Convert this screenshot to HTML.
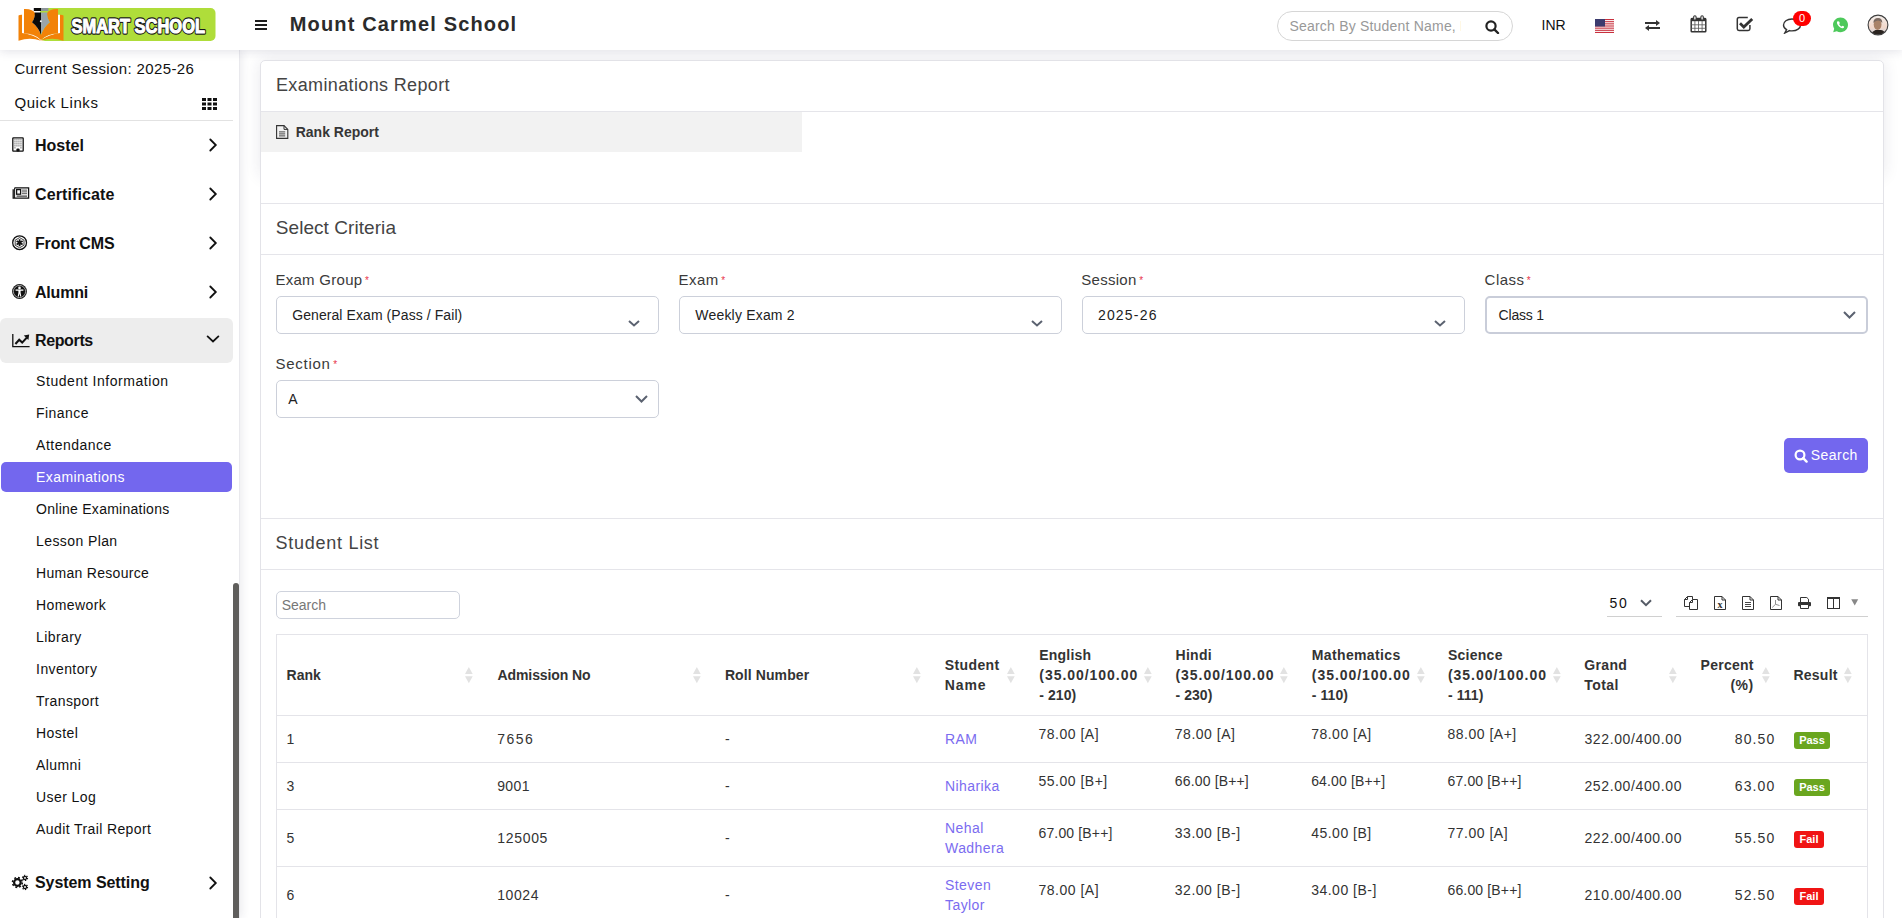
<!DOCTYPE html>
<html><head><meta charset="utf-8"><title>Rank Report</title>
<style>
*{box-sizing:border-box;margin:0;padding:0}
html,body{width:1902px;height:918px;overflow:hidden;background:#fff;font-family:"Liberation Sans",sans-serif;color:#333}
.a{position:absolute;white-space:nowrap}
.chev{position:absolute;width:8px;height:8px;border-right:2px solid #222;border-top:2px solid #222;transform:rotate(45deg)}
.sel{position:absolute;height:38px;border:1px solid #ccd0da;border-radius:5px;background:#fff}
.hl{position:absolute;height:1px;background:#e5e5ea}
.req{color:#e8344a;font-size:10px;position:relative;top:-1px;margin-left:2.5px;letter-spacing:0}
</style></head><body>

<div class="a" style="left:260px;top:60px;width:1624px;height:116px;border-radius:5px 5px 0 0;box-shadow:0 0 16px rgba(40,40,80,.10)"></div>
<div class="a" style="left:260px;top:60px;width:1624px;height:870px;background:#fff;border:1px solid #e3e3e8;border-radius:5px 5px 0 0"></div>
<div class="a" style="left:276.00px;top:71.76px;font-size:18px;line-height:26px;color:#444;letter-spacing:0.36px">Examinations Report</div>
<div class="hl" style="left:261px;top:111px;width:1622px"></div>
<div class="a" style="left:261px;top:112px;width:541px;height:40px;background:#f2f2f2"></div>
<svg class="a" style="left:276px;top:125px" width="13" height="14" viewBox="0 0 13 14"><path d="M0.6 0.6H8L11.8 4.4V13.4H0.6Z" fill="none" stroke="#333" stroke-width="1.1"/><path d="M8 0.6V4.4H11.8" fill="none" stroke="#333" stroke-width="1"/><path d="M3 6.9H9.2M3 8.9H9.2M3 10.9H9.2" stroke="#333" stroke-width="0.9"/></svg>
<div class="a" style="left:295.70px;top:122.05px;font-size:14px;line-height:20px;color:#363636;font-weight:bold">Rank Report</div>
<div class="hl" style="left:261px;top:203px;width:1622px"></div>
<div class="a" style="left:275.80px;top:214.22px;font-size:19px;line-height:28px;color:#444;letter-spacing:0.06px">Select Criteria</div>
<div class="hl" style="left:261px;top:254px;width:1622px"></div>
<div class="a" style="left:275.40px;top:268.60px;font-size:15px;line-height:22px;color:#3a3a3a;letter-spacing:0.29px">Exam Group<span class="req">*</span></div>
<div class="sel" style="left:276px;top:296px;width:383px"></div>
<div class="a" style="left:292.20px;top:304.75px;font-size:14px;line-height:20px;color:#222;letter-spacing:0.08px">General Exam (Pass / Fail)</div>
<svg class="a" style="left:628px;top:320px" width="12" height="7" viewBox="0 0 12 7"><path d="M1 1L6 5.5L11 1" fill="none" stroke="#5b6270" stroke-width="2"/></svg>
<div class="a" style="left:678.50px;top:268.60px;font-size:15px;line-height:22px;color:#3a3a3a;letter-spacing:0.45px">Exam<span class="req">*</span></div>
<div class="sel" style="left:679px;top:296px;width:383px"></div>
<div class="a" style="left:695.30px;top:304.75px;font-size:14px;line-height:20px;color:#222;letter-spacing:0.19px">Weekly Exam 2</div>
<svg class="a" style="left:1031px;top:320px" width="12" height="7" viewBox="0 0 12 7"><path d="M1 1L6 5.5L11 1" fill="none" stroke="#5b6270" stroke-width="2"/></svg>
<div class="a" style="left:1081.20px;top:268.60px;font-size:15px;line-height:22px;color:#3a3a3a;letter-spacing:0.3px">Session<span class="req">*</span></div>
<div class="sel" style="left:1082px;top:296px;width:383px"></div>
<div class="a" style="left:1097.90px;top:304.75px;font-size:14px;line-height:20px;color:#222;letter-spacing:1.2px">2025-26</div>
<svg class="a" style="left:1434px;top:320px" width="12" height="7" viewBox="0 0 12 7"><path d="M1 1L6 5.5L11 1" fill="none" stroke="#5b6270" stroke-width="2"/></svg>
<div class="a" style="left:1484.60px;top:268.60px;font-size:15px;line-height:22px;color:#3a3a3a;letter-spacing:0.45px">Class<span class="req">*</span></div>
<div class="sel" style="left:1485px;top:296px;width:383px;border:2px solid #c9cdd9"></div>
<div class="a" style="left:1498.60px;top:304.75px;font-size:14px;line-height:20px;color:#222;letter-spacing:-0.2px">Class 1</div>
<svg class="a" style="left:1843px;top:311px" width="13" height="8" viewBox="0 0 13 8"><path d="M1 1L6.5 6.5L12 1" fill="none" stroke="#5b6270" stroke-width="2"/></svg>
<div class="a" style="left:275.40px;top:352.50px;font-size:15px;line-height:22px;color:#3a3a3a;letter-spacing:0.75px">Section<span class="req">*</span></div>
<div class="sel" style="left:276px;top:380px;width:383px"></div>
<div class="a" style="left:288.30px;top:389.15px;font-size:14px;line-height:20px;color:#222">A</div>
<svg class="a" style="left:635px;top:395px" width="13" height="8" viewBox="0 0 13 8"><path d="M1 1L6.5 6.5L12 1" fill="none" stroke="#5b6270" stroke-width="2"/></svg>
<div class="a" style="left:1784px;top:438px;width:84px;height:35px;background:#7367ee;border-radius:5px"></div>
<svg class="a" style="left:1794px;top:449px" width="14" height="14" viewBox="0 0 14 14"><circle cx="6" cy="6" r="4.4" stroke="#fff" stroke-width="2.2" fill="none"/><path d="M9.2 9.2L12.6 12.6" stroke="#fff" stroke-width="2.4" stroke-linecap="round"/></svg>
<div class="a" style="left:1810.80px;top:445.15px;font-size:14px;line-height:20px;color:#fff;letter-spacing:0.44px">Search</div>
<div class="hl" style="left:261px;top:518px;width:1622px"></div>
<div class="a" style="left:275.60px;top:529.76px;font-size:18px;line-height:26px;color:#444;letter-spacing:0.72px">Student List</div>
<div class="hl" style="left:261px;top:569px;width:1622px"></div>
<div class="a" style="left:276px;top:591px;width:184px;height:28px;border:1px solid #cfd3dd;border-radius:5px"></div>
<div class="a" style="left:281.70px;top:594.95px;font-size:14px;line-height:20px;color:#777">Search</div>
<div class="a" style="left:1609.60px;top:593.35px;font-size:14px;line-height:20px;color:#111;letter-spacing:1.6px">50</div>
<svg class="a" style="left:1640px;top:599px" width="12" height="8" viewBox="0 0 12 8"><path d="M1 1.2L6 6.2L11 1.2" fill="none" stroke="#555b66" stroke-width="2"/></svg>
<div class="a" style="left:1607px;top:616px;width:55px;height:1px;background:#d0d0d0"></div>
<div class="a" style="left:1676px;top:616px;width:192px;height:1px;background:#d0d0d0"></div>
<svg class="a" style="left:1684px;top:596px" width="15" height="14" viewBox="0 0 15 14"><path d="M5.3 10.5H0.5V3.5L3.5 0.5H8.5V3" fill="none" stroke="#333" stroke-width="1"/><path d="M0.5 3.5H3.5V0.5" fill="none" stroke="#333" stroke-width="1"/><path d="M5.5 6.5L8.5 3.5H13.5V13.5H5.5Z" fill="#fff" stroke="#333" stroke-width="1"/><path d="M5.5 6.5H8.5V3.5" fill="none" stroke="#333" stroke-width="1"/></svg>
<svg class="a" style="left:1714px;top:596px" width="12" height="14" viewBox="0 0 12 14"><path d="M0.5 0.5H8L11.5 4V13.5H0.5Z" fill="none" stroke="#333" stroke-width="1"/><path d="M8 0.5V4H11.5" fill="none" stroke="#333" stroke-width="1"/><text x="6" y="11.8" font-family="Liberation Serif" font-weight="bold" font-size="10" text-anchor="middle" fill="#333">x</text></svg>
<svg class="a" style="left:1742px;top:596px" width="12" height="14" viewBox="0 0 12 14"><path d="M0.5 0.5H8L11.5 4V13.5H0.5Z" fill="none" stroke="#333" stroke-width="1"/><path d="M8 0.5V4H11.5" fill="none" stroke="#333" stroke-width="1"/><path d="M3 6.5H9M3 8.5H9M3 10.5H9" stroke="#333" stroke-width="0.9"/></svg>
<svg class="a" style="left:1770px;top:596px" width="12" height="14" viewBox="0 0 12 14"><path d="M0.5 0.5H8L11.5 4V13.5H0.5Z" fill="none" stroke="#333" stroke-width="1"/><path d="M8 0.5V4H11.5" fill="none" stroke="#333" stroke-width="1"/><path d="M5.5 4V8.3M5.5 8.3L2.2 11.5M5.5 8.3L9.5 9.5" fill="none" stroke="#777" stroke-width="0.8"/></svg>
<svg class="a" style="left:1798px;top:597px" width="13" height="12" viewBox="0 0 13 12"><path d="M2.5 5.5V0.5H8.8L10.5 2.2V5.5" fill="none" stroke="#333" stroke-width="1"/><rect x="0" y="5" width="13" height="4.2" rx="1" fill="#333"/><path d="M2.5 7.5V11.5H10.5V7.5Z" fill="#fff" stroke="#333" stroke-width="1"/></svg>
<svg class="a" style="left:1827px;top:597px" width="13" height="12" viewBox="0 0 13 12"><rect x="0.5" y="0.5" width="12" height="11" fill="none" stroke="#333" stroke-width="1"/><rect x="0" y="0" width="13" height="2" fill="#333"/><path d="M6.5 1V11.5" stroke="#333" stroke-width="1"/></svg>
<svg class="a" style="left:1851px;top:599px" width="8" height="7" viewBox="0 0 8 7"><path d="M0.2 0.2H7.2L3.7 6.4Z" fill="#888"/></svg>
<div class="a" style="left:276px;top:634px;width:1592px;height:300px;border:1px solid #e4e4e9"></div>
<div class="hl" style="left:277px;top:715px;width:1590px;background:#e4e4e9"></div>
<div class="hl" style="left:277px;top:762px;width:1590px;background:#e4e4e9"></div>
<div class="hl" style="left:277px;top:809px;width:1590px;background:#e4e4e9"></div>
<div class="hl" style="left:277px;top:866px;width:1590px;background:#e4e4e9"></div>
<div class="a" style="left:286.60px;top:665.25px;font-size:14px;line-height:20px;color:#333;font-weight:bold">Rank</div>
<svg class="a" style="left:465.3px;top:666.5px" width="8" height="17" viewBox="0 0 8 17"><path d="M3.85 0L7.7 7H0Z" fill="#e2e2e2"/><path d="M3.85 16.3L7.7 9.3H0Z" fill="#e2e2e2"/></svg>
<div class="a" style="left:497.50px;top:665.25px;font-size:14px;line-height:20px;color:#333;font-weight:bold;letter-spacing:-0.09px">Admission No</div>
<svg class="a" style="left:692.6px;top:666.5px" width="8" height="17" viewBox="0 0 8 17"><path d="M3.85 0L7.7 7H0Z" fill="#e2e2e2"/><path d="M3.85 16.3L7.7 9.3H0Z" fill="#e2e2e2"/></svg>
<div class="a" style="left:724.90px;top:665.25px;font-size:14px;line-height:20px;color:#333;font-weight:bold;letter-spacing:0.1px">Roll Number</div>
<svg class="a" style="left:913px;top:666.5px" width="8" height="17" viewBox="0 0 8 17"><path d="M3.85 0L7.7 7H0Z" fill="#e2e2e2"/><path d="M3.85 16.3L7.7 9.3H0Z" fill="#e2e2e2"/></svg>
<div class="a" style="left:944.80px;top:655.45px;font-size:14px;line-height:20px;color:#333;font-weight:bold;letter-spacing:0.37px">Student</div>
<div class="a" style="left:944.80px;top:675.15px;font-size:14px;line-height:20px;color:#333;font-weight:bold;letter-spacing:0.87px">Name</div>
<svg class="a" style="left:1007.2px;top:666.5px" width="8" height="17" viewBox="0 0 8 17"><path d="M3.85 0L7.7 7H0Z" fill="#e2e2e2"/><path d="M3.85 16.3L7.7 9.3H0Z" fill="#e2e2e2"/></svg>
<div class="a" style="left:1039.30px;top:645.45px;font-size:14px;line-height:20px;color:#333;font-weight:bold;letter-spacing:0.2px">English</div>
<div class="a" style="left:1039.30px;top:664.85px;font-size:14px;line-height:20px;color:#333;font-weight:bold;letter-spacing:0.96px">(35.00/100.00</div>
<div class="a" style="left:1039.30px;top:684.75px;font-size:14px;line-height:20px;color:#333;font-weight:bold;letter-spacing:0.06px">- 210)</div>
<svg class="a" style="left:1143.5px;top:666.5px" width="8" height="17" viewBox="0 0 8 17"><path d="M3.85 0L7.7 7H0Z" fill="#e2e2e2"/><path d="M3.85 16.3L7.7 9.3H0Z" fill="#e2e2e2"/></svg>
<div class="a" style="left:1175.50px;top:645.45px;font-size:14px;line-height:20px;color:#333;font-weight:bold;letter-spacing:0.3px">Hindi</div>
<div class="a" style="left:1175.50px;top:664.85px;font-size:14px;line-height:20px;color:#333;font-weight:bold;letter-spacing:0.96px">(35.00/100.00</div>
<div class="a" style="left:1175.50px;top:684.75px;font-size:14px;line-height:20px;color:#333;font-weight:bold;letter-spacing:0.06px">- 230)</div>
<svg class="a" style="left:1279.5px;top:666.5px" width="8" height="17" viewBox="0 0 8 17"><path d="M3.85 0L7.7 7H0Z" fill="#e2e2e2"/><path d="M3.85 16.3L7.7 9.3H0Z" fill="#e2e2e2"/></svg>
<div class="a" style="left:1311.80px;top:645.45px;font-size:14px;line-height:20px;color:#333;font-weight:bold;letter-spacing:0.36px">Mathematics</div>
<div class="a" style="left:1311.80px;top:664.85px;font-size:14px;line-height:20px;color:#333;font-weight:bold;letter-spacing:0.96px">(35.00/100.00</div>
<div class="a" style="left:1311.80px;top:684.75px;font-size:14px;line-height:20px;color:#333;font-weight:bold;letter-spacing:0.06px">- 110)</div>
<svg class="a" style="left:1416.5px;top:666.5px" width="8" height="17" viewBox="0 0 8 17"><path d="M3.85 0L7.7 7H0Z" fill="#e2e2e2"/><path d="M3.85 16.3L7.7 9.3H0Z" fill="#e2e2e2"/></svg>
<div class="a" style="left:1448.00px;top:645.45px;font-size:14px;line-height:20px;color:#333;font-weight:bold;letter-spacing:0.25px">Science</div>
<div class="a" style="left:1448.00px;top:664.85px;font-size:14px;line-height:20px;color:#333;font-weight:bold;letter-spacing:0.96px">(35.00/100.00</div>
<div class="a" style="left:1448.00px;top:684.75px;font-size:14px;line-height:20px;color:#333;font-weight:bold;letter-spacing:0.06px">- 111)</div>
<svg class="a" style="left:1552.5px;top:666.5px" width="8" height="17" viewBox="0 0 8 17"><path d="M3.85 0L7.7 7H0Z" fill="#e2e2e2"/><path d="M3.85 16.3L7.7 9.3H0Z" fill="#e2e2e2"/></svg>
<div class="a" style="left:1584.30px;top:655.45px;font-size:14px;line-height:20px;color:#333;font-weight:bold;letter-spacing:0.35px">Grand</div>
<div class="a" style="left:1584.30px;top:675.15px;font-size:14px;line-height:20px;color:#333;font-weight:bold;letter-spacing:0.45px">Total</div>
<svg class="a" style="left:1669px;top:666.5px" width="8" height="17" viewBox="0 0 8 17"><path d="M3.85 0L7.7 7H0Z" fill="#e2e2e2"/><path d="M3.85 16.3L7.7 9.3H0Z" fill="#e2e2e2"/></svg>
<div class="a" style="right:148.30px;text-align:right;top:655.45px;font-size:14px;line-height:20px;color:#333;font-weight:bold;letter-spacing:0.25px">Percent</div>
<div class="a" style="right:148.30px;text-align:right;top:675.15px;font-size:14px;line-height:20px;color:#333;font-weight:bold;letter-spacing:0.5px">(%)</div>
<svg class="a" style="left:1761.5px;top:666.5px" width="8" height="17" viewBox="0 0 8 17"><path d="M3.85 0L7.7 7H0Z" fill="#e2e2e2"/><path d="M3.85 16.3L7.7 9.3H0Z" fill="#e2e2e2"/></svg>
<div class="a" style="left:1793.40px;top:665.25px;font-size:14px;line-height:20px;color:#333;font-weight:bold;letter-spacing:0.26px">Result</div>
<svg class="a" style="left:1844px;top:666.5px" width="8" height="17" viewBox="0 0 8 17"><path d="M3.85 0L7.7 7H0Z" fill="#e2e2e2"/><path d="M3.85 16.3L7.7 9.3H0Z" fill="#e2e2e2"/></svg>
<div class="a" style="left:286.40px;top:729.15px;font-size:14px;line-height:20px;color:#333;letter-spacing:1px">1</div>
<div class="a" style="left:497.20px;top:729.15px;font-size:14px;line-height:20px;color:#333;letter-spacing:1.5px">7656</div>
<div class="a" style="left:725.00px;top:729.15px;font-size:14px;line-height:20px;color:#333">-</div>
<div class="a" style="left:945.10px;top:728.85px;font-size:14px;line-height:20px;color:#7b6cf0;letter-spacing:0.4px">RAM</div>
<div class="a" style="left:1038.50px;top:724.15px;font-size:14px;line-height:20px;color:#333;letter-spacing:0.5px">78.00 [A]</div>
<div class="a" style="left:1174.83px;top:724.15px;font-size:14px;line-height:20px;color:#333;letter-spacing:0.5px">78.00 [A]</div>
<div class="a" style="left:1311.16px;top:724.15px;font-size:14px;line-height:20px;color:#333;letter-spacing:0.5px">78.00 [A]</div>
<div class="a" style="left:1447.49px;top:724.15px;font-size:14px;line-height:20px;color:#333;letter-spacing:0.5px">88.00 [A+]</div>
<div class="a" style="left:1584.40px;top:729.15px;font-size:14px;line-height:20px;color:#333;letter-spacing:0.63px">322.00/400.00</div>
<div class="a" style="right:126.70px;text-align:right;top:729.15px;font-size:14px;line-height:20px;color:#333;letter-spacing:1.1px">80.50</div>
<div class="a" style="left:1794px;top:732px;width:36px;height:17px;border-radius:3px;background:#6aa61f;color:#fff;font-size:11px;font-weight:bold;text-align:center;line-height:17px">Pass</div>
<div class="a" style="left:286.40px;top:776.15px;font-size:14px;line-height:20px;color:#333;letter-spacing:1px">3</div>
<div class="a" style="left:497.20px;top:776.15px;font-size:14px;line-height:20px;color:#333;letter-spacing:0.4px">9001</div>
<div class="a" style="left:725.00px;top:776.15px;font-size:14px;line-height:20px;color:#333">-</div>
<div class="a" style="left:945.10px;top:776.45px;font-size:14px;line-height:20px;color:#7b6cf0;letter-spacing:0.4px">Niharika</div>
<div class="a" style="left:1038.50px;top:771.15px;font-size:14px;line-height:20px;color:#333;letter-spacing:0.5px">55.00 [B+]</div>
<div class="a" style="left:1174.83px;top:771.15px;font-size:14px;line-height:20px;color:#333;letter-spacing:0.15px">66.00 [B++]</div>
<div class="a" style="left:1311.16px;top:771.15px;font-size:14px;line-height:20px;color:#333;letter-spacing:0.15px">64.00 [B++]</div>
<div class="a" style="left:1447.49px;top:771.15px;font-size:14px;line-height:20px;color:#333;letter-spacing:0.15px">67.00 [B++]</div>
<div class="a" style="left:1584.40px;top:776.15px;font-size:14px;line-height:20px;color:#333;letter-spacing:0.63px">252.00/400.00</div>
<div class="a" style="right:126.70px;text-align:right;top:776.15px;font-size:14px;line-height:20px;color:#333;letter-spacing:1.1px">63.00</div>
<div class="a" style="left:1794px;top:779px;width:36px;height:17px;border-radius:3px;background:#6aa61f;color:#fff;font-size:11px;font-weight:bold;text-align:center;line-height:17px">Pass</div>
<div class="a" style="left:286.40px;top:827.95px;font-size:14px;line-height:20px;color:#333;letter-spacing:1px">5</div>
<div class="a" style="left:497.20px;top:827.95px;font-size:14px;line-height:20px;color:#333;letter-spacing:0.7px">125005</div>
<div class="a" style="left:725.00px;top:827.95px;font-size:14px;line-height:20px;color:#333">-</div>
<div class="a" style="left:945.10px;top:817.95px;font-size:14px;line-height:20px;color:#7b6cf0;letter-spacing:0.4px">Nehal</div>
<div class="a" style="left:945.10px;top:837.65px;font-size:14px;line-height:20px;color:#7b6cf0;letter-spacing:0.4px">Wadhera</div>
<div class="a" style="left:1038.50px;top:822.85px;font-size:14px;line-height:20px;color:#333;letter-spacing:0.15px">67.00 [B++]</div>
<div class="a" style="left:1174.83px;top:822.85px;font-size:14px;line-height:20px;color:#333;letter-spacing:0.5px">33.00 [B-]</div>
<div class="a" style="left:1311.16px;top:822.85px;font-size:14px;line-height:20px;color:#333;letter-spacing:0.5px">45.00 [B]</div>
<div class="a" style="left:1447.49px;top:822.85px;font-size:14px;line-height:20px;color:#333;letter-spacing:0.5px">77.00 [A]</div>
<div class="a" style="left:1584.40px;top:827.95px;font-size:14px;line-height:20px;color:#333;letter-spacing:0.63px">222.00/400.00</div>
<div class="a" style="right:126.70px;text-align:right;top:827.95px;font-size:14px;line-height:20px;color:#333;letter-spacing:1.1px">55.50</div>
<div class="a" style="left:1794px;top:831px;width:30px;height:17px;border-radius:3px;background:#f01414;color:#fff;font-size:11px;font-weight:bold;text-align:center;line-height:17px">Fail</div>
<div class="a" style="left:286.40px;top:885.15px;font-size:14px;line-height:20px;color:#333;letter-spacing:1px">6</div>
<div class="a" style="left:497.20px;top:885.15px;font-size:14px;line-height:20px;color:#333;letter-spacing:0.6px">10024</div>
<div class="a" style="left:725.00px;top:885.15px;font-size:14px;line-height:20px;color:#333">-</div>
<div class="a" style="left:945.10px;top:875.15px;font-size:14px;line-height:20px;color:#7b6cf0;letter-spacing:0.4px">Steven</div>
<div class="a" style="left:945.10px;top:894.85px;font-size:14px;line-height:20px;color:#7b6cf0;letter-spacing:0.4px">Taylor</div>
<div class="a" style="left:1038.50px;top:879.65px;font-size:14px;line-height:20px;color:#333;letter-spacing:0.5px">78.00 [A]</div>
<div class="a" style="left:1174.83px;top:879.65px;font-size:14px;line-height:20px;color:#333;letter-spacing:0.5px">32.00 [B-]</div>
<div class="a" style="left:1311.16px;top:879.65px;font-size:14px;line-height:20px;color:#333;letter-spacing:0.5px">34.00 [B-]</div>
<div class="a" style="left:1447.49px;top:879.65px;font-size:14px;line-height:20px;color:#333;letter-spacing:0.15px">66.00 [B++]</div>
<div class="a" style="left:1584.40px;top:885.15px;font-size:14px;line-height:20px;color:#333;letter-spacing:0.63px">210.00/400.00</div>
<div class="a" style="right:126.70px;text-align:right;top:885.15px;font-size:14px;line-height:20px;color:#333;letter-spacing:1.1px">52.50</div>
<div class="a" style="left:1794px;top:888px;width:30px;height:17px;border-radius:3px;background:#f01414;color:#fff;font-size:11px;font-weight:bold;text-align:center;line-height:17px">Fail</div>
<div class="a" style="left:0;top:50px;width:240px;height:868px;background:#fff;border-right:1px solid #e9e9ed;box-shadow:2px 0 8px rgba(40,40,80,.09)"></div>
<div class="a" style="left:14.40px;top:57.70px;font-size:15px;line-height:22px;color:#111;letter-spacing:0.37px">Current Session: 2025-26</div>
<div class="a" style="left:14.40px;top:92.30px;font-size:15px;line-height:22px;color:#111;letter-spacing:0.6px">Quick Links</div>
<svg class="a" style="left:202px;top:98px" width="15" height="12" viewBox="0 0 15 12"><g fill="#111"><rect x="0" y="0" width="4" height="3"/><rect x="5.5" y="0" width="4" height="3"/><rect x="11" y="0" width="4" height="3"/><rect x="0" y="4.5" width="4" height="3"/><rect x="5.5" y="4.5" width="4" height="3"/><rect x="11" y="4.5" width="4" height="3"/><rect x="0" y="9" width="4" height="3"/><rect x="5.5" y="9" width="4" height="3"/><rect x="11" y="9" width="4" height="3"/></g></svg>
<div class="a" style="left:0;top:120px;width:233px;height:1px;background:#e2e2e2"></div>
<svg class="a" style="left:12px;top:137px" width="12" height="15" viewBox="0 0 12 15"><rect x="0.8" y="0.8" width="10.4" height="13.4" rx="0.6" fill="none" stroke="#111" stroke-width="1.3"/><g fill="#555"><rect x="2.4" y="2.3" width="1.1" height="1.1"/><rect x="4.4" y="2.3" width="1.1" height="1.1"/><rect x="6.4" y="2.3" width="1.1" height="1.1"/><rect x="8.4" y="2.3" width="1.1" height="1.1"/><rect x="2.4" y="4.3" width="1.1" height="1.1"/><rect x="4.4" y="4.3" width="1.1" height="1.1"/><rect x="6.4" y="4.3" width="1.1" height="1.1"/><rect x="8.4" y="4.3" width="1.1" height="1.1"/><rect x="2.4" y="6.3" width="1.1" height="1.1"/><rect x="4.4" y="6.3" width="1.1" height="1.1"/><rect x="6.4" y="6.3" width="1.1" height="1.1"/><rect x="8.4" y="6.3" width="1.1" height="1.1"/><rect x="2.4" y="8.3" width="1.1" height="1.1"/><rect x="4.4" y="8.3" width="1.1" height="1.1"/><rect x="6.4" y="8.3" width="1.1" height="1.1"/><rect x="8.4" y="8.3" width="1.1" height="1.1"/><rect x="2.4" y="10.3" width="1.1" height="1.1"/><rect x="8.4" y="10.3" width="1.1" height="1.1"/></g><rect x="4.4" y="11.6" width="3.2" height="3" rx="1" fill="#111"/></svg>
<div class="a" style="left:35.00px;top:133.56px;font-size:16px;line-height:23px;color:#111;font-weight:bold">Hostel</div>
<svg class="a" style="left:205px;top:136px" width="16" height="18" viewBox="0 0 16 18"><path d="M5.3 3.5L10.8 9L5.3 14.5" fill="none" stroke="#111" stroke-width="1.8" stroke-linecap="round" stroke-linejoin="miter"/></svg>
<svg class="a" style="left:12px;top:187px" width="18" height="12" viewBox="0 0 18 12"><path d="M2.6 0.8H16.6V11.2H1.2V2.2" fill="none" stroke="#111" stroke-width="1.3"/><path d="M2.6 0.8V11" stroke="#111" stroke-width="1"/><rect x="4.6" y="2.6" width="4" height="4.6" fill="none" stroke="#111" stroke-width="1.3"/><g fill="#555"><rect x="10" y="2.6" width="5" height="1"/><rect x="10" y="4.4" width="5" height="1"/><rect x="10" y="6.2" width="5" height="1"/></g><rect x="4.6" y="8.6" width="10.4" height="1" fill="#111"/></svg>
<div class="a" style="left:35.00px;top:182.66px;font-size:16px;line-height:23px;color:#111;font-weight:bold;letter-spacing:0.12px">Certificate</div>
<svg class="a" style="left:205px;top:185px" width="16" height="18" viewBox="0 0 16 18"><path d="M5.3 3.5L10.8 9L5.3 14.5" fill="none" stroke="#111" stroke-width="1.8" stroke-linecap="round" stroke-linejoin="miter"/></svg>
<svg class="a" style="left:12px;top:235px" width="16" height="16" viewBox="0 0 16 16"><circle cx="7.6" cy="7.7" r="6.9" fill="none" stroke="#111" stroke-width="1.3"/><path d="M7.6 2.6L12 5.15V10.25L7.6 12.8L3.2 10.25V5.15Z" fill="none" stroke="#111" stroke-width="0.8"/><path d="M7.6 4.2V11.2M4.6 5.95L10.6 9.45M4.6 9.45L10.6 5.95" stroke="#111" stroke-width="1.8"/></svg>
<div class="a" style="left:35.00px;top:231.56px;font-size:16px;line-height:23px;color:#111;font-weight:bold;letter-spacing:-0.16px">Front CMS</div>
<svg class="a" style="left:205px;top:234px" width="16" height="18" viewBox="0 0 16 18"><path d="M5.3 3.5L10.8 9L5.3 14.5" fill="none" stroke="#111" stroke-width="1.8" stroke-linecap="round" stroke-linejoin="miter"/></svg>
<svg class="a" style="left:12px;top:284px" width="16" height="16" viewBox="0 0 16 16"><circle cx="7.5" cy="7.5" r="7.4" fill="#111"/><circle cx="7.5" cy="7.5" r="6.1" fill="none" stroke="#fff" stroke-width="0.6"/><circle cx="7.5" cy="3.9" r="1.3" fill="#fff"/><path d="M3.6 6.1H11.4" stroke="#fff" stroke-width="1.3"/><path d="M6.4 6.1H8.6V8.8L9.3 12.4H8.2L7.5 9.6L6.8 12.4H5.7L6.4 8.8Z" fill="#fff"/></svg>
<div class="a" style="left:35.00px;top:280.76px;font-size:16px;line-height:23px;color:#111;font-weight:bold;letter-spacing:-0.2px">Alumni</div>
<svg class="a" style="left:205px;top:283px" width="16" height="18" viewBox="0 0 16 18"><path d="M5.3 3.5L10.8 9L5.3 14.5" fill="none" stroke="#111" stroke-width="1.8" stroke-linecap="round" stroke-linejoin="miter"/></svg>
<div class="a" style="left:0;top:318px;width:233px;height:45px;background:#ededed;border-radius:6px"></div>
<svg class="a" style="left:12px;top:333px" width="18" height="15" viewBox="0 0 18 15"><path d="M0.8 1V13.6H17.6" fill="none" stroke="#111" stroke-width="1.3"/><path d="M3.4 11L7.2 6.8L10.2 9.6L14.8 4.6" fill="none" stroke="#111" stroke-width="2.1"/><path d="M11.8 2.6L17.2 1.6L16.4 7Z" fill="#111"/></svg>
<div class="a" style="left:35.00px;top:328.96px;font-size:16px;line-height:23px;color:#111;font-weight:bold;letter-spacing:-0.37px">Reports</div>
<svg class="a" style="left:204px;top:331px" width="18" height="14" viewBox="0 0 18 14"><path d="M3.6 5.4L9 10.5L14.4 5.4" fill="none" stroke="#111" stroke-width="1.8" stroke-linecap="round"/></svg>
<div class="a" style="left:36.10px;top:371.15px;font-size:14px;line-height:20px;color:#111;letter-spacing:0.54px">Student Information</div>
<div class="a" style="left:36.10px;top:403.15px;font-size:14px;line-height:20px;color:#111;letter-spacing:0.43px">Finance</div>
<div class="a" style="left:36.10px;top:435.15px;font-size:14px;line-height:20px;color:#111;letter-spacing:0.48px">Attendance</div>
<div class="a" style="left:1px;top:462px;width:231px;height:30px;background:#7367ee;border-radius:5px"></div>
<div class="a" style="left:36.10px;top:467.15px;font-size:14px;line-height:20px;color:#fff;letter-spacing:0.4px">Examinations</div>
<div class="a" style="left:36.10px;top:499.15px;font-size:14px;line-height:20px;color:#111;letter-spacing:0.26px">Online Examinations</div>
<div class="a" style="left:36.10px;top:531.15px;font-size:14px;line-height:20px;color:#111;letter-spacing:0.4px">Lesson Plan</div>
<div class="a" style="left:36.10px;top:563.15px;font-size:14px;line-height:20px;color:#111;letter-spacing:0.29px">Human Resource</div>
<div class="a" style="left:36.10px;top:595.15px;font-size:14px;line-height:20px;color:#111;letter-spacing:0.4px">Homework</div>
<div class="a" style="left:36.10px;top:627.15px;font-size:14px;line-height:20px;color:#111;letter-spacing:0.4px">Library</div>
<div class="a" style="left:36.10px;top:659.15px;font-size:14px;line-height:20px;color:#111;letter-spacing:0.4px">Inventory</div>
<div class="a" style="left:36.10px;top:691.15px;font-size:14px;line-height:20px;color:#111;letter-spacing:0.4px">Transport</div>
<div class="a" style="left:36.10px;top:723.15px;font-size:14px;line-height:20px;color:#111;letter-spacing:0.4px">Hostel</div>
<div class="a" style="left:36.10px;top:755.15px;font-size:14px;line-height:20px;color:#111;letter-spacing:0.4px">Alumni</div>
<div class="a" style="left:36.10px;top:787.15px;font-size:14px;line-height:20px;color:#111;letter-spacing:0.4px">User Log</div>
<div class="a" style="left:36.10px;top:819.15px;font-size:14px;line-height:20px;color:#111;letter-spacing:0.39px">Audit Trail Report</div>
<svg class="a" style="left:11px;top:874px" width="19" height="17" viewBox="0 0 19 17"><circle cx="6.4" cy="8.5" r="3.3" fill="none" stroke="#111" stroke-width="2.2"/><circle cx="6.4" cy="8.5" r="4.9" fill="none" stroke="#111" stroke-width="1.6" stroke-dasharray="1.9 1.95"/><circle cx="14" cy="3.9" r="1.6" fill="none" stroke="#111" stroke-width="1.3"/><circle cx="14" cy="3.9" r="2.6" fill="none" stroke="#111" stroke-width="1.1" stroke-dasharray="1.3 1.42"/><circle cx="14" cy="13" r="1.6" fill="none" stroke="#111" stroke-width="1.3"/><circle cx="14" cy="13" r="2.6" fill="none" stroke="#111" stroke-width="1.1" stroke-dasharray="1.3 1.42"/></svg>
<div class="a" style="left:35.00px;top:870.96px;font-size:16px;line-height:23px;color:#111;font-weight:bold;letter-spacing:-0.07px">System Setting</div>
<svg class="a" style="left:205px;top:874px" width="16" height="18" viewBox="0 0 16 18"><path d="M5.3 3.5L10.8 9L5.3 14.5" fill="none" stroke="#111" stroke-width="1.8" stroke-linecap="round" stroke-linejoin="miter"/></svg>
<div class="a" style="left:233px;top:583px;width:6px;height:340px;background:#5f5e5c;border-radius:3px"></div>
<div class="a" style="left:0;top:0;width:1902px;height:50px;background:#fff;box-shadow:0 1px 10px rgba(40,40,80,.15)"></div>
<svg class="a" style="left:0;top:0" width="220" height="46" viewBox="0 0 220 46">
<rect x="40" y="8" width="175.5" height="33" rx="5" fill="#afdd3a"/>
<path d="M18.5 15.5 Q20 14.6 22 14.8 L22 33 Q33 32.5 41 40.8 Q30 36.5 18.5 40.8 Z" fill="#f28208"/>
<path d="M63.5 15.5 Q62 14.6 60 14.8 L60 33 Q49 32.5 41 40.8 Q52 36.5 63.5 40.8 Z" fill="#f28208"/>
<path d="M22 14.8 L24 14.8 L24 33.3 Q34 33.5 41 39.8 Q33 34.6 22 33 Z" fill="#fff"/>
<path d="M60 14.8 L58 14.8 L58 33.3 Q48 33.5 41 39.8 Q49 34.6 60 33 Z" fill="#fff"/>
<path d="M24 9 Q33 8.6 35.2 13.5 Q35 18 32.2 22.3 Q38 27 41 35 L41 40 Q34 33.4 24 33.3 Z" fill="#f28208"/>
<path d="M58 9 Q49 8.6 46.8 13.5 Q47 18 49.8 22.3 Q44 27 41 35 L41 40 Q48 33.4 58 33.3 Z" fill="#f28208"/>
<rect x="33.8" y="8" width="7.2" height="3" fill="#0a0a0a"/>
<rect x="41" y="8" width="7.4" height="3" fill="#8e979a"/>
<path d="M34.6 12.6 L41 12.6 L41 34.7 Q38 27 32 22.3 Q35.5 17.5 34.6 12.6 Z" fill="#0a0a0a"/>
<path d="M47.4 12.6 L41 12.6 L41 34.7 Q44 27 49.8 22.3 Q46.5 17.5 47.4 12.6 Z" fill="#9aa4a8"/>
<circle cx="40.8" cy="21.3" r="1" fill="#fff"/>
<text x="71.5" y="33" font-family="Liberation Sans" font-weight="bold" font-size="20.6" fill="#222" stroke="#1a1a1a" stroke-width="3.4" stroke-linejoin="round" textLength="133.5" lengthAdjust="spacingAndGlyphs">SMART SCHOOL</text>
<text x="71.5" y="33" font-family="Liberation Sans" font-weight="bold" font-size="20.6" fill="#fff" stroke="#fff" stroke-width="1.1" stroke-linejoin="round" textLength="133.5" lengthAdjust="spacingAndGlyphs">SMART SCHOOL</text>
</svg>
<svg class="a" style="left:255px;top:20px" width="12" height="10" viewBox="0 0 12 10"><rect y="0" width="12" height="2" fill="#1e1e1e"/><rect y="4" width="12" height="2" fill="#1e1e1e"/><rect y="8" width="12" height="2" fill="#1e1e1e"/></svg>
<div class="a" style="left:289.80px;top:9.87px;font-size:20px;line-height:29px;color:#2b2b2b;font-weight:bold;letter-spacing:1.15px">Mount Carmel School</div>
<div class="a" style="left:1277px;top:11px;width:236px;height:30px;border:1px solid #d6d6d6;border-radius:15px;background:#fff"></div>
<div class="a" style="left:1289.50px;top:15.85px;font-size:14px;line-height:20px;color:#999;letter-spacing:0.2px;width:171px;overflow:hidden">Search By Student Name, R</div>
<svg class="a" style="left:1485px;top:20px" width="15" height="14" viewBox="0 0 15 14"><circle cx="6" cy="6" r="4.6" stroke="#222" stroke-width="2.2" fill="none"/><path d="M9.3 9.3 L13 13" stroke="#222" stroke-width="2.4" stroke-linecap="round"/></svg>
<div class="a" style="left:1541.60px;top:15.15px;font-size:14px;line-height:20px;color:#111">INR</div>
<svg class="a" style="left:1595px;top:19px" width="19" height="14" viewBox="0 0 19 14"><rect width="19" height="14" fill="#fff"/><g fill="#c8313e"><rect y="0" width="19" height="1.1"/><rect y="2.15" width="19" height="1.1"/><rect y="4.3" width="19" height="1.1"/><rect y="6.45" width="19" height="1.1"/><rect y="8.6" width="19" height="1.1"/><rect y="10.75" width="19" height="1.1"/><rect y="12.9" width="19" height="1.1"/></g><rect width="10" height="7.5" fill="#3c3b6e"/></svg>
<svg class="a" style="left:1644px;top:19px" width="17" height="13" viewBox="0 0 17 13"><path d="M1 4 H14" stroke="#333" stroke-width="2"/><path d="M12 1 L16 4 L12 7 Z" fill="#333"/><path d="M16 9 H3" stroke="#333" stroke-width="2"/><path d="M5 6 L1 9 L5 12 Z" fill="#333"/></svg>
<svg class="a" style="left:1690px;top:15px" width="17" height="18" viewBox="0 0 17 18"><rect x="1.2" y="3.6" width="14.6" height="13.2" rx="0.8" fill="none" stroke="#333" stroke-width="1.5"/><rect x="1" y="3.4" width="15" height="2.8" fill="#333"/><path d="M4.9 6V16.5M8.5 6V16.5M12.1 6V16.5M1.2 9.8H15.8M1.2 13.3H15.8" stroke="#555" stroke-width="0.8"/><rect x="3.7" y="0.7" width="2.4" height="4.4" rx="1.2" fill="#fff" stroke="#333" stroke-width="1.1"/><rect x="10.9" y="0.7" width="2.4" height="4.4" rx="1.2" fill="#fff" stroke="#333" stroke-width="1.1"/></svg>
<svg class="a" style="left:1736px;top:16px" width="18" height="16" viewBox="0 0 18 16"><path d="M11.8 1.6H3Q1.3 1.6 1.3 3.3V12.8Q1.3 14.5 3 14.5H12.2Q13.9 14.5 13.9 12.8V9" fill="none" stroke="#333" stroke-width="1.5"/><path d="M4 7.3L7.8 11L16.2 2.9" fill="none" stroke="#333" stroke-width="2.8"/></svg>
<svg class="a" style="left:1782px;top:17px" width="20" height="17" viewBox="0 0 20 17"><path d="M10 2 C5 2 1.5 4.6 1.5 8 C1.5 10 2.7 11.6 4.6 12.6 L2.8 16 L7.5 13.6 C8.3 13.8 9.1 13.9 10 13.9 C15 13.9 18.5 11.3 18.5 8 C18.5 4.6 15 2 10 2 Z" fill="none" stroke="#333" stroke-width="1.4"/></svg>
<div class="a" style="left:1793px;top:11px;width:18px;height:15px;border-radius:8px;background:#f00;color:#fff;font-size:11px;text-align:center;line-height:15px">0</div>
<svg class="a" style="left:1832px;top:17px" width="17" height="16" viewBox="0 0 17 16"><path d="M8.5 0.5 C4.3 0.5 1 3.8 1 7.8 C1 9.3 1.5 10.6 2.2 11.8 L1.2 15.3 L4.8 14.3 C5.9 14.9 7.1 15.2 8.5 15.2 C12.7 15.2 16 11.9 16 7.8 C16 3.8 12.7 0.5 8.5 0.5 Z" fill="#4dc95b"/><path d="M5.6 4.2 C5.2 4.6 4.8 5.2 5 6.2 C5.5 8.4 7.6 10.6 10 11.2 C11 11.4 11.6 11 12 10.5 L12.1 9.6 L10.5 8.8 L9.7 9.6 C8.5 9.1 7.6 8.2 7.1 7 L7.9 6.2 L7.1 4.5 Z" fill="#fff"/></svg>
<svg class="a" style="left:1867px;top:14px" width="22" height="22" viewBox="0 0 22 22"><defs><clipPath id="av"><circle cx="11" cy="11" r="9.8"/></clipPath><linearGradient id="avg" x1="0" y1="0" x2="0" y2="1"><stop offset="0" stop-color="#f3f1ef"/><stop offset="0.6" stop-color="#f2d8cb"/><stop offset="1" stop-color="#c5d3e3"/></linearGradient></defs><g clip-path="url(#av)"><rect width="22" height="22" fill="url(#avg)"/><ellipse cx="10.6" cy="10.6" rx="3.9" ry="5.3" fill="#a98369"/><path d="M6.3 9 Q6.5 4 11 4 Q15.3 4 15.3 9 Q13.5 6.4 11 6.4 Q8.4 6.4 6.3 9Z" fill="#7b6b62"/><path d="M3 23 Q4.5 17.5 8.5 16 L14 16 Q18.5 17 20.5 23Z" fill="#2a2420"/></g><circle cx="11" cy="11" r="9.9" fill="none" stroke="#3f3f3f" stroke-width="1.1"/></svg>
</body></html>
